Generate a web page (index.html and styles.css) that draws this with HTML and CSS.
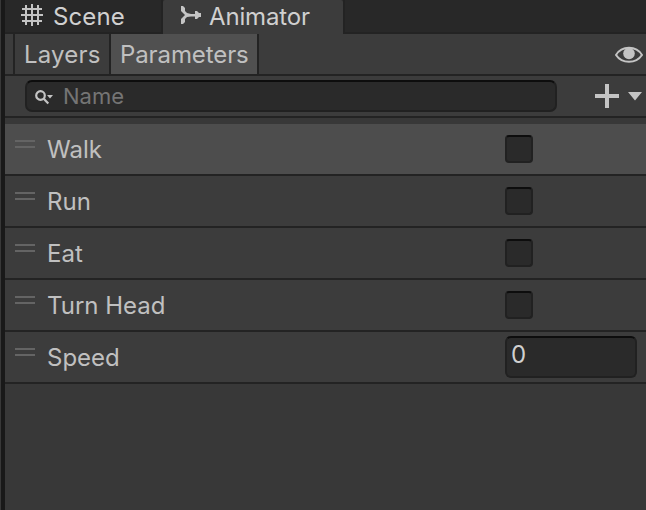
FILE: index.html
```html
<!DOCTYPE html>
<html lang="en">
<head>
<meta charset="utf-8">
<title>Animator</title>
<link rel="stylesheet" href="styles.css">
</head>
<body>
<div class="window">
  <div class="splitter"></div>
  <main class="panel">
    <nav class="tabs">
      <div class="tab tab-scene">
        <svg class="icon-grid" width="22" height="22" viewBox="0 0 22 22"><path d="M5 1V21M11 0V22M17 1V21M1 5H21M0 11H22M1 17H21"/></svg>
        <span>Scene</span>
      </div>
      <div class="tab tab-animator">
        <svg class="icon-animator" width="20" height="18" viewBox="0 0 20 18"><path d="M0 0H2L4 2V5L6 7L10 8H14V5H16L18 7H20V11H18L16 13H14V10.500H10L6 11L4 13V16L2 18H0V13L2 11L4 9L2 7L0 5Z"/></svg>
        <span>Animator</span>
      </div>
      <div class="tab-space"></div>
    </nav>
    <div class="toolbar">
      <div class="mode layers"><span>Layers</span></div>
      <div class="mode parameters"><span>Parameters</span></div>
      <svg class="icon-eye" width="28" height="18" viewBox="0 0 28 18"><path class="lid" d="M1 9C4 4 9 1.800 14 1.800S24 4 27 9C24 13.500 19 15.800 14 15.800S4 13.500 1 9Z"/><circle cx="14" cy="7.500" r="5.800"/></svg>
    </div>
    <div class="search-row">
      <div class="search">
        <svg width="18" height="15" viewBox="0 0 18 15"><circle cx="5.500" cy="5.500" r="4.300"/><path class="handle" d="M8.500 8.500L13.300 13.500"/><path class="arrow" d="M12 5H18L15 8.500Z"/></svg>
        <span>Name</span>
      </div>
      <svg class="icon-add" width="48" height="24" viewBox="0 0 48 24"><path d="M10 0H14V10H24V14H14V24H10V14H0V10H10ZM33 8H47L40 16.500Z"/></svg>
    </div>
    <ul class="list">
      <li class="row selected"><i class="grip"></i><span class="label">Walk</span><i class="check"></i></li>
      <li class="row"><i class="grip"></i><span class="label">Run</span><i class="check"></i></li>
      <li class="row"><i class="grip"></i><span class="label">Eat</span><i class="check"></i></li>
      <li class="row"><i class="grip"></i><span class="label">Turn Head</span><i class="check"></i></li>
      <li class="row"><i class="grip"></i><span class="label">Speed</span><span class="number">0</span></li>
    </ul>
  </main>
</div>
</body>
</html>
```
FILE: styles.css
```css
* { box-sizing: border-box; }
body {
  margin: 0;
  background: #383838;
  color: #c0c0c0;
  font: 24px/30px Inter, sans-serif;
  overflow: hidden;
}
svg { display: block; flex: none; fill: #c4c4c4; }
.window { display: flex; width: 646px; height: 510px; }
.splitter { width: 5px; flex: none; background: #191919; border-left: 1px solid #383838; }
.panel { flex: 1; min-width: 0; }

.tabs { display: flex; height: 34px; background: #282828; color: #d0d0d0; }
.tab { display: flex; align-items: flex-start; }
.tab span { margin-top: 2px; }
.tab-scene {
  width: 158px;
  padding-left: 16px;
  border-right: 2px solid #232323;
  border-bottom: 2px solid #232323;
}
.tab-scene span { margin-left: 10px; letter-spacing: 0.1px; }
.icon-grid { margin-top: 4px; fill: none; stroke: #c4c4c4; stroke-width: 2; }
.tab-animator { width: 180px; padding-left: 18px; background: #3c3c3c; border-radius: 2px 2px 0 0; }
.icon-animator { margin-top: 6px; }
.tab-animator span { margin-left: 8px; letter-spacing: -0.15px; }
.tab-space { flex: 1; border-left: 2px solid #232323; border-bottom: 2px solid #232323; }

.toolbar {
  display: flex;
  height: 42px;
  padding-left: 8px;
  background: #3c3c3c;
  border-bottom: 2px solid #232323;
}
.mode { border-right: 2px solid #232323; padding: 6px 0 0 9px; }
.layers { width: 98px; border-left: 2px solid #232323; letter-spacing: 0.2px; }
.parameters { width: 148px; background: #505050; letter-spacing: -0.1px; }
.icon-eye { margin: 12px 3px 0 auto; }
.icon-eye .lid { fill: none; stroke: #c4c4c4; stroke-width: 2; }

.search-row {
  display: flex;
  height: 42px;
  padding: 4px 0 0 20px;
  background: #3c3c3c;
  border-bottom: 2px solid #232323;
}
.search {
  display: flex;
  width: 532px;
  height: 32px;
  padding-left: 8px;
  background: #2a2a2a;
  border: 2px solid #212121;
  border-top-color: #0d0d0d;
  border-radius: 7px;
  color: #757575;
}
.search svg { margin-top: 8px; }
.search circle, .search .handle { fill: none; stroke: #c4c4c4; stroke-width: 2.2; }
.search span { margin-left: 10px; font-size: 22px; line-height: 29px; }
.icon-add { margin: 4px 0 0 38px; }

.list { list-style: none; margin: 0; padding: 6px 0 0; }
.row {
  display: flex;
  height: 52px;
  padding-left: 10px;
  background: #3c3c3c;
  border-bottom: 2px solid #232323;
}
.selected { background: #4d4d4d; }
.grip {
  width: 20px;
  height: 8px;
  margin-top: 16px;
  border: solid #646464;
  border-width: 2px 0;
}
.label { width: 458px; margin: 11px 0 0 12px; }
.check, .number {
  width: 28px;
  height: 28px;
  margin-top: 11px;
  background: #2a2a2a;
  border: 2px solid #212121;
  border-top-color: #0d0d0d;
  border-radius: 4px;
}
.number {
  width: 132px;
  height: 42px;
  margin-top: 4px;
  padding: 2px 0 0 4px;
  border-radius: 6px;
  color: #d0d0d0;
}
```
